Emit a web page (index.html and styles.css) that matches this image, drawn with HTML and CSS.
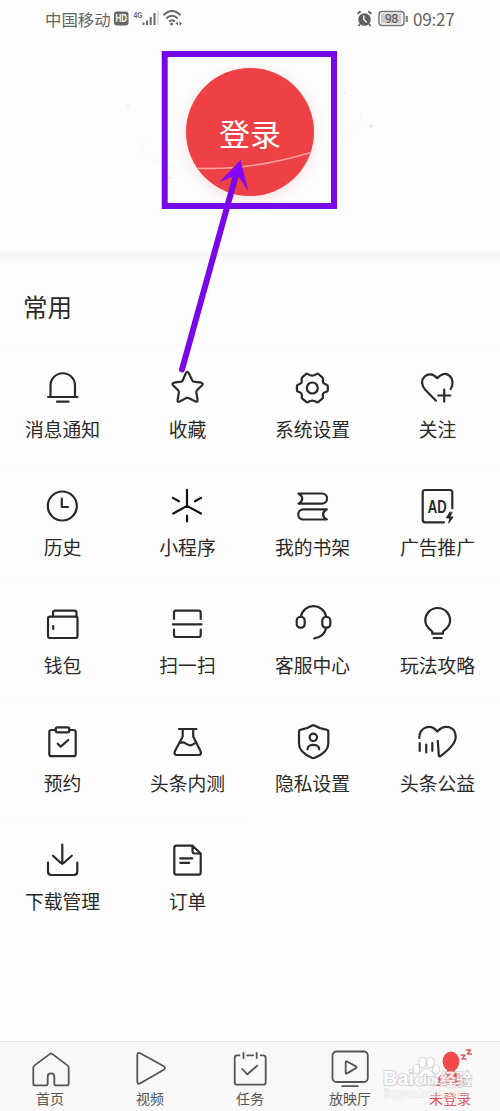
FILE: index.html
```html
<!DOCTYPE html>
<html lang="zh-CN">
<head>
<meta charset="utf-8">
<title>我的</title>
<link rel="stylesheet" href="styles.css">
</head>
<body>
<div class="screen">
  <header class="status">
    <span class="carrier">中国移动</span>
    <svg class="signals" width="73" height="20" viewBox="0 0 73 20">
      <rect x="3" y="2.500" width="14.500" height="14" rx="3" fill="#666"/>
      <text x="4.600" y="13.200" class="hd" textLength="11.500" lengthAdjust="spacingAndGlyphs">HD</text>
      <text x="22.500" y="8.500" class="lte" textLength="9" lengthAdjust="spacingAndGlyphs">4G</text>
      <path d="M32.500 13.500v2.500M36 11.500v4.500M39.700 8v8M43.500 4v12" stroke="#666" stroke-width="2"/>
      <path d="M47 2v14" stroke="#ccc" stroke-width="1.200"/>
      <path d="M52.500 6.200Q61-2 69.500 6.200M55.300 9.500Q61 4 66.700 9.500M58 12.500Q61 9.800 64 12.500" fill="none" stroke="#666" stroke-width="1.900"/>
      <circle cx="60.500" cy="15" r="1.500" fill="#666"/>
      <path d="M67 12.500v4l-2.500-2zM68.500 12.500v4l2.500-2z" fill="#666"/>
    </svg>
    <svg class="power" width="54" height="20" viewBox="0 0 54 20">
      <circle cx="8.500" cy="10.500" r="6.300" fill="#606060"/>
      <path d="M1.500 4.800l3.200-2.600M15.500 4.800l-3.200-2.600M4 15l-1.500 2M13 15l1.500 2" stroke="#606060" stroke-width="1.800"/>
      <path d="M7.800 6.500v4l3 3" fill="none" stroke="#fff" stroke-width="1.400"/>
      <rect x="23" y="2.500" width="25" height="14" rx="3" fill="#fdfdfd" stroke="#777" stroke-width="1.500"/>
      <rect x="25" y="4.500" width="20.500" height="10" fill="#ccc"/>
      <text x="28.700" y="13.800" class="charge" textLength="13.500">98</text>
      <path d="M50.800 7v6" stroke="#777" stroke-width="2"/>
    </svg>
    <span class="time">09:27</span>
  </header>

  <section class="profile">
    <svg class="orbit" width="260" height="180" viewBox="120 40 260 180">
      <path d="M148 137C132 149 148 165 190 168M322 150C352 139 366 122 360 113" fill="none" stroke="#f7f7f7"/>
      <circle cx="128" cy="106" r="1.500" fill="#eee"/><circle cx="371" cy="126" r="1.800" fill="#e9e9e9"/><circle cx="345" cy="93" r="1.200" fill="#f0f0f0"/><circle cx="170" cy="178" r="1.200" fill="#f3eaea"/>
    </svg>
    <div class="login">
      <span>登录</span>
      <svg class="ring" width="128" height="128" viewBox="0 0 128 128"><path d="M11.500 100.300Q65 102.500 125 84.500" fill="none" stroke="#f9a3a3" stroke-width="1.500"/></svg>
    </div>
  </section>

  <main class="common">
    <h2>常用</h2>
    <div class="grid">
      <div class="cell"><svg viewBox="0 0 41 40"><path d="M8.500 29V17.500a12.200 12.200 0 0 1 24.500 0V29M6 29h29.500M15 33.700h11.500"/></svg><span>消息通知</span></div>
      <div class="cell"><svg viewBox="0 0 41 40"><path d="M18.800 5.200q1.500-2.600 3 0l3.500 7.200q.5 1 1.600 1.200l7.300 1.100q2.400.6.900 2.500l-5.300 5.400q-.7.800-.5 1.800l1.300 7.300q.2 2.600-2 1.800l-7.100-3.400q-1.200-.6-2.400 0l-6.300 3.400q-2.600.9-2.200-1.700l1.300-7.600q.1-1-.6-1.700l-5.300-5.300q-1.400-1.900 1-2.500l7.200-1q1-.2 1.500-1.200z"/></svg><span>收藏</span></div>
      <div class="cell"><svg viewBox="0 0 41 40"><path d="M4.900 18.200v4q0 .9.900 1.200l2.400 1q1.700.8 1.700 2.400l-.2 2.500q0 .9.700 1.400l3.800 3.200q1 .7 1.900.1 4.200-2.900 8.400 0 .9.600 1.900-.1l3.800-3.200q.8-.5.700-1.400l-.2-2.500q0-1.600 1.700-2.400l2.500-1q.9-.3.900-1.200v-4q0-.9-.8-1.200l-2.500-1.200q-1.600-.8-1.600-2.400l.1-2.700q0-.9-.7-1.400l-3.900-3.300q-1-.7-1.900 0-4.200 3.400-8.600 0-.9-.7-1.900 0l-3.800 3.300q-.7.500-.6 1.400l.2 2.700q0 1.600-1.600 2.300l-2.600 1.200q-.7.400-.7 1.300z"/><circle cx="20.300" cy="20" r="5.500"/></svg><span>系统设置</span></div>
      <div class="cell"><svg viewBox="0 0 41 40"><path d="M19 32.700L8 21.500C-.5 12 11.500.2 20.300 10.200 29-.5 40 11 33.700 21M27.200 21.700v12M21.200 27.500h12"/></svg><span>关注</span></div>

      <div class="cell"><svg viewBox="0 0 41 40"><circle cx="20.300" cy="20" r="14.500"/><path d="M19.800 12.700V21H26"/></svg><span>历史</span></div>
      <div class="cell"><svg viewBox="0 0 41 40"><path class="ink" d="M20 3.800v16.100L6.300 27.500M20 19.900l14 7.600M5.900 11.900l6 3.400M34 11.900l-6 3.400M20 29.700v5.700"/></svg><span>小程序</span></div>
      <div class="cell"><svg viewBox="0 0 41 40"><path d="M6.500 7.500h23.300c7 0 7 10.200 0 10.200H6.500c5-2.700 5-7.500 0-10.200zM34.800 23.300H11.500c-7 0-7 10.200 0 10.200h23.300c-5-2.700-5-7.500 0-10.200z"/></svg><span>我的书架</span></div>
      <div class="cell"><svg viewBox="0 0 41 40"><path d="M35.300 22.300V6.500q0-2.500-2.500-2.500H8.200Q5.700 4 5.700 6.500v27.300q0 2.500 2.500 2.500H27"/><text x="10.800" y="26.500" class="ad" textLength="18.800" lengthAdjust="spacingAndGlyphs">AD</text><path d="M32.500 26.500l-3.200 5.500h3.400l-1 5.200 4.500-6.300h-3.200l2-4.400z" class="bolt"/></svg><span>广告推广</span></div>

      <div class="cell"><svg viewBox="0 0 41 40"><rect x="6" y="12.600" width="29.500" height="21.400" rx="2"/><path d="M11 12.500V8.900q0-2.200 2.200-2.200h19.100q2.200 0 2.200 2.200v4M11.200 22v3"/></svg><span>钱包</span></div>
      <div class="cell"><svg viewBox="0 0 41 40"><path d="M7 15V8.700q0-2 2-2h22.700q2 0 2 2V15M5.900 20.300h28.600M7 25.500V31q0 2 2 2h22.700q2 0 2-2v-5.500"/></svg><span>扫一扫</span></div>
      <div class="cell"><svg viewBox="0 0 41 40"><rect x="4.700" y="13" width="8" height="10.700" rx="3.500"/><rect x="30.300" y="13" width="8" height="10.700" rx="3.500"/><path d="M8.700 13C11.500-1.500 31.500-1.500 34.300 13M34.300 24q-2.300 9-12 10.300"/></svg><span>客服中心</span></div>
      <div class="cell"><svg viewBox="0 0 41 40"><path d="M15.300 29.700v-2c0-1.500-7-3.500-7-11.300a12.400 12.400 0 0 1 24.800 0c0 7.800-7.200 9.800-7.200 11.300v2zM16.700 34h8"/></svg><span>玩法攻略</span></div>

      <div class="cell"><svg viewBox="0 0 41 40"><path d="M13.700 8H9.500Q7.300 8 7.300 10v22.200q0 2 2.200 2h22q2.200 0 2.200-2V10q0-2-2.200-2h-4.200M15.700 21.700l3 3 7.600-6.700"/><rect x="13.700" y="5.300" width="13.700" height="5" rx="1.800"/></svg><span>预约</span></div>
      <div class="cell"><svg viewBox="0 0 41 40"><path d="M11.900 7h17.600M15.700 7v7.500L8 29q-1.500 4 2 4h21.500q3.500 0 2-4L26.200 14.500V7M12 21.400q3.500-2 6.500 0 4.500 3.200 7.500 1 2-1.600 3.700-1"/></svg><span>头条内测</span></div>
      <div class="cell"><svg viewBox="0 0 41 40"><path d="M20.300 3.500q1-.6 2 0 5.700 3.500 12.700 4.300 1.300.2 1.300 1.500V22q0 8-13.500 13.800-1.500.7-3 0Q7 30 7 22V9.300q0-1.300 1.300-1.500Q14.600 7 20.300 3.500z"/><circle cx="21.300" cy="15.300" r="3.700"/><path d="M15.500 27.300c0-6 11.700-6 11.700 0"/></svg><span>隐私设置</span></div>
      <div class="cell"><svg viewBox="0 0 41 40"><path d="M2.300 16C2.500 5 13.500 1 20.300 9.500 28 1 38.700 5 38.700 15c0 6-5.500 12-15.200 19.100q-1.500 1-1.700-1L20.800 18.900M2.700 21v8M9.200 22.700v7.800M15.300 21v7.800"/></svg><span>头条公益</span></div>

      <div class="cell"><svg viewBox="0 0 41 40"><path d="M20.300 4.500V24M11 15.700l7.600 7q1.700 1.500 3.400 0l7.800-7M6 22.500v9q0 3.500 3.500 3.500h22.300q3.500 0 3.500-3.500v-9"/></svg><span>下载管理</span></div>
      <div class="cell"><svg viewBox="0 0 41 40"><path d="M25.500 5.700H9.500q-2.200 0-2.200 2.200v24.600q0 2.200 2.200 2.200h22q2.200 0 2.200-2.200V13.500zM25.500 5.700v5.600q0 2.200 2.200 2.200h6M13.200 18.400h12M13.200 22.800h9"/></svg><span>订单</span></div>
    </div>
  </main>

  <nav class="tabs">
    <div class="tab"><svg viewBox="0 0 60 44"><path d="M29.600 10.100q1.400-1.200 2.800 0l15.100 11.300q1.200 1 1.200 2.500v15.500q0 2-2 2H36.300q-2 0-2-2V32.500q0-3.200-3.300-3.200t-3.300 3.200v6.900q0 2-2 2H15.300q-2 0-2-2V23.900q0-1.500 1.200-2.500z"/></svg><span>首页</span></div>
    <div class="tab"><svg viewBox="0 0 60 44"><path d="M17.300 11q0-3.300 3-1.700l23.500 13q2.400 1.800 0 3.500L20.300 39.200q-3 1.600-3-1.600z"/></svg><span>视频</span></div>
    <div class="tab"><svg viewBox="0 0 60 44"><path d="M19.500 11.400h-2.300q-2.500 0-2.500 2.500v24.300q0 2.500 2.500 2.500h26q2.500 0 2.500-2.500V13.900q0-2.500-2.500-2.500h-2.500M27.200 11.400h6M23.500 9v5M36.700 9v5M22.300 25l5 5.300 10-8.700"/></svg><span>任务</span></div>
    <div class="tab"><svg viewBox="0 0 60 44"><rect x="12.500" y="7.500" width="35.300" height="30.500" rx="4"/><path d="M22.300 42.200h15.400M25.700 18.200q0-1.400 1.300-.7l9 4.900q1.200.9 0 1.700l-9 5.300q-1.300.7-1.300-.7z"/></svg><span>放映厅</span></div>
    <div class="tab active"><svg viewBox="0 0 60 44"><ellipse cx="31" cy="17.500" rx="8.400" ry="10"/><path d="M27 25h8v4l7 2q3.500 1.500 3.500 8h-28q0-6.500 3.500-8l6-2zM15.500 40.500H47v1.600H15.500z"/><path class="snore" d="M41 11h4l-3 4h4M46.500 6h4l-3 4h4"/></svg><span>未登录</span></div>
  </nav>

  <svg class="watermark" width="95" height="60" viewBox="0 0 95 60">
    <g class="mark">
      <text x="3" y="35" class="brand" textLength="31" lengthAdjust="spacingAndGlyphs">Bai</text>
      <ellipse cx="36.500" cy="19" rx="3" ry="4.300"/><ellipse cx="42.500" cy="12.500" rx="3.300" ry="5"/><ellipse cx="50.500" cy="12.500" rx="3.300" ry="5"/><ellipse cx="56" cy="19.500" rx="3" ry="4.300"/>
      <path d="M46.500 19c4.500 0 5.500 4.500 9 7.500 5 4.500 2 10-3.500 9q-5.500-1-11 0c-5.500 1-8.500-4.500-3.500-9 3.500-3 4.500-7.500 9-7.500z"/>
      <text x="39" y="34" class="du">du</text>
      <text x="60" y="34.500" class="word">经验</text>
    </g>
    <text x="4" y="47" class="site" textLength="84">jingyan.baidu.com</text>
  </svg>

  <svg class="callout" width="500" height="1111" viewBox="0 0 500 1111">
    <rect x="164.700" y="54" width="169.300" height="152" fill="none" stroke="#7908e8" stroke-width="6"/>
    <path d="M182 369.500L236 175" stroke="#7908e8" stroke-width="6" stroke-linecap="round"/>
    <path d="M240.500 160L219 182.500l13.500-6h6L248.500 191.500z" fill="#8408f4"/>
  </svg>
</div>
</body>
</html>
```

FILE: styles.css
```css
* { box-sizing: border-box; }
body { margin: 0; font-family: "Noto Sans CJK SC", sans-serif; background: #fdfdfd; color: #2a2a2a; }
.screen { position: relative; width: 500px; height: 1111px; overflow: hidden; display: flex; flex-direction: column; background: #fdfdfd; }

.status { height: 38px; display: flex; align-items: center; padding: 0 45px; color: #666; }
.carrier { font-size: 16.400px; line-height: 20px; width: 66px; padding-bottom: 1px; white-space: nowrap; }
.signals { display: block; }
.power { display: block; margin-left: auto; margin-right: 3px; }
.time { font-size: 17px; line-height: 20px; width: 42px; letter-spacing: -.200px; white-space: nowrap; padding-bottom: 1px; }
.hd { font: bold 10px "Liberation Sans", sans-serif; fill: #fff; }
.lte { font: bold 8.500px "Liberation Sans", sans-serif; fill: #666; }
.charge { font: 12.500px Roboto, sans-serif; fill: #555; }

.profile { position: relative; height: 214px; flex: none; padding-top: 30px; }
.orbit { position: absolute; left: 120px; top: 2px; }
.login { position: relative; width: 128px; height: 128px; margin: 0 auto; border-radius: 50%; background: #ee4145; box-shadow: 0 3px 14px rgba(238, 65, 69, .160); display: flex; align-items: center; justify-content: center; color: #fff; font-size: 31px; line-height: 40px; padding-top: 1px; }
.ring { position: absolute; left: 0; top: 0; }

.common { flex: 1; border-top: 11px solid #f8f8f8; }
.common h2 { margin: 0; height: 83px; padding: 24px 0 0 23px; font-size: 24.500px; line-height: 40px; font-weight: 400; }
.grid { display: grid; grid-template-columns: repeat(4, 125px); grid-auto-rows: 118px; }
.cell { display: flex; flex-direction: column; align-items: center; padding-top: 21px; border-top: 1px solid #fafafa; font-size: 18.800px; line-height: 28px; white-space: nowrap; }
.cell svg { width: 41px; height: 40px; margin-bottom: 7px; fill: none; stroke: #2a2a2a; stroke-width: 2.200; stroke-linecap: round; stroke-linejoin: round; }
.cell .ink { stroke: #111; }
.cell .ad { font: bold 18px "Liberation Sans", sans-serif; fill: #2a2a2a; stroke: none; }
.cell .bolt { fill: #2a2a2a; stroke-width: .800; }

.tabs { height: 70px; flex: none; display: grid; grid-template-columns: repeat(5, 100px); background: #f8f8f8; border-top: 1px solid #e6e6e6; }
.tab { display: flex; flex-direction: column; align-items: center; padding-top: 2px; font-size: 14px; line-height: 20px; color: #555; }
.tab svg { width: 60px; height: 44px; fill: none; stroke: #555; stroke-width: 1.800; stroke-linecap: round; stroke-linejoin: round; }
.tab.active { color: #df5555; }
.tab.active svg { fill: #f34a4c; stroke: none; }
.tab.active .snore { fill: none; stroke: #e65356; stroke-width: 1.400; }

.watermark { position: absolute; left: 380px; top: 1050px; }
.mark { fill: #fff; stroke: #c4c4c4; stroke-width: 1.600; paint-order: stroke; opacity: .880; }
.brand { font: bold 20px "Liberation Sans", sans-serif; }
.du { font: bold 13px "Liberation Sans", sans-serif; }
.word { font: 500 16px "Noto Sans CJK SC", sans-serif; }
.site { font: 11px "Liberation Sans", sans-serif; fill: #fff; stroke: #d0d0d0; stroke-width: .800; paint-order: stroke; opacity: .600; }
.callout { position: absolute; left: 0; top: 0; pointer-events: none; }
```
